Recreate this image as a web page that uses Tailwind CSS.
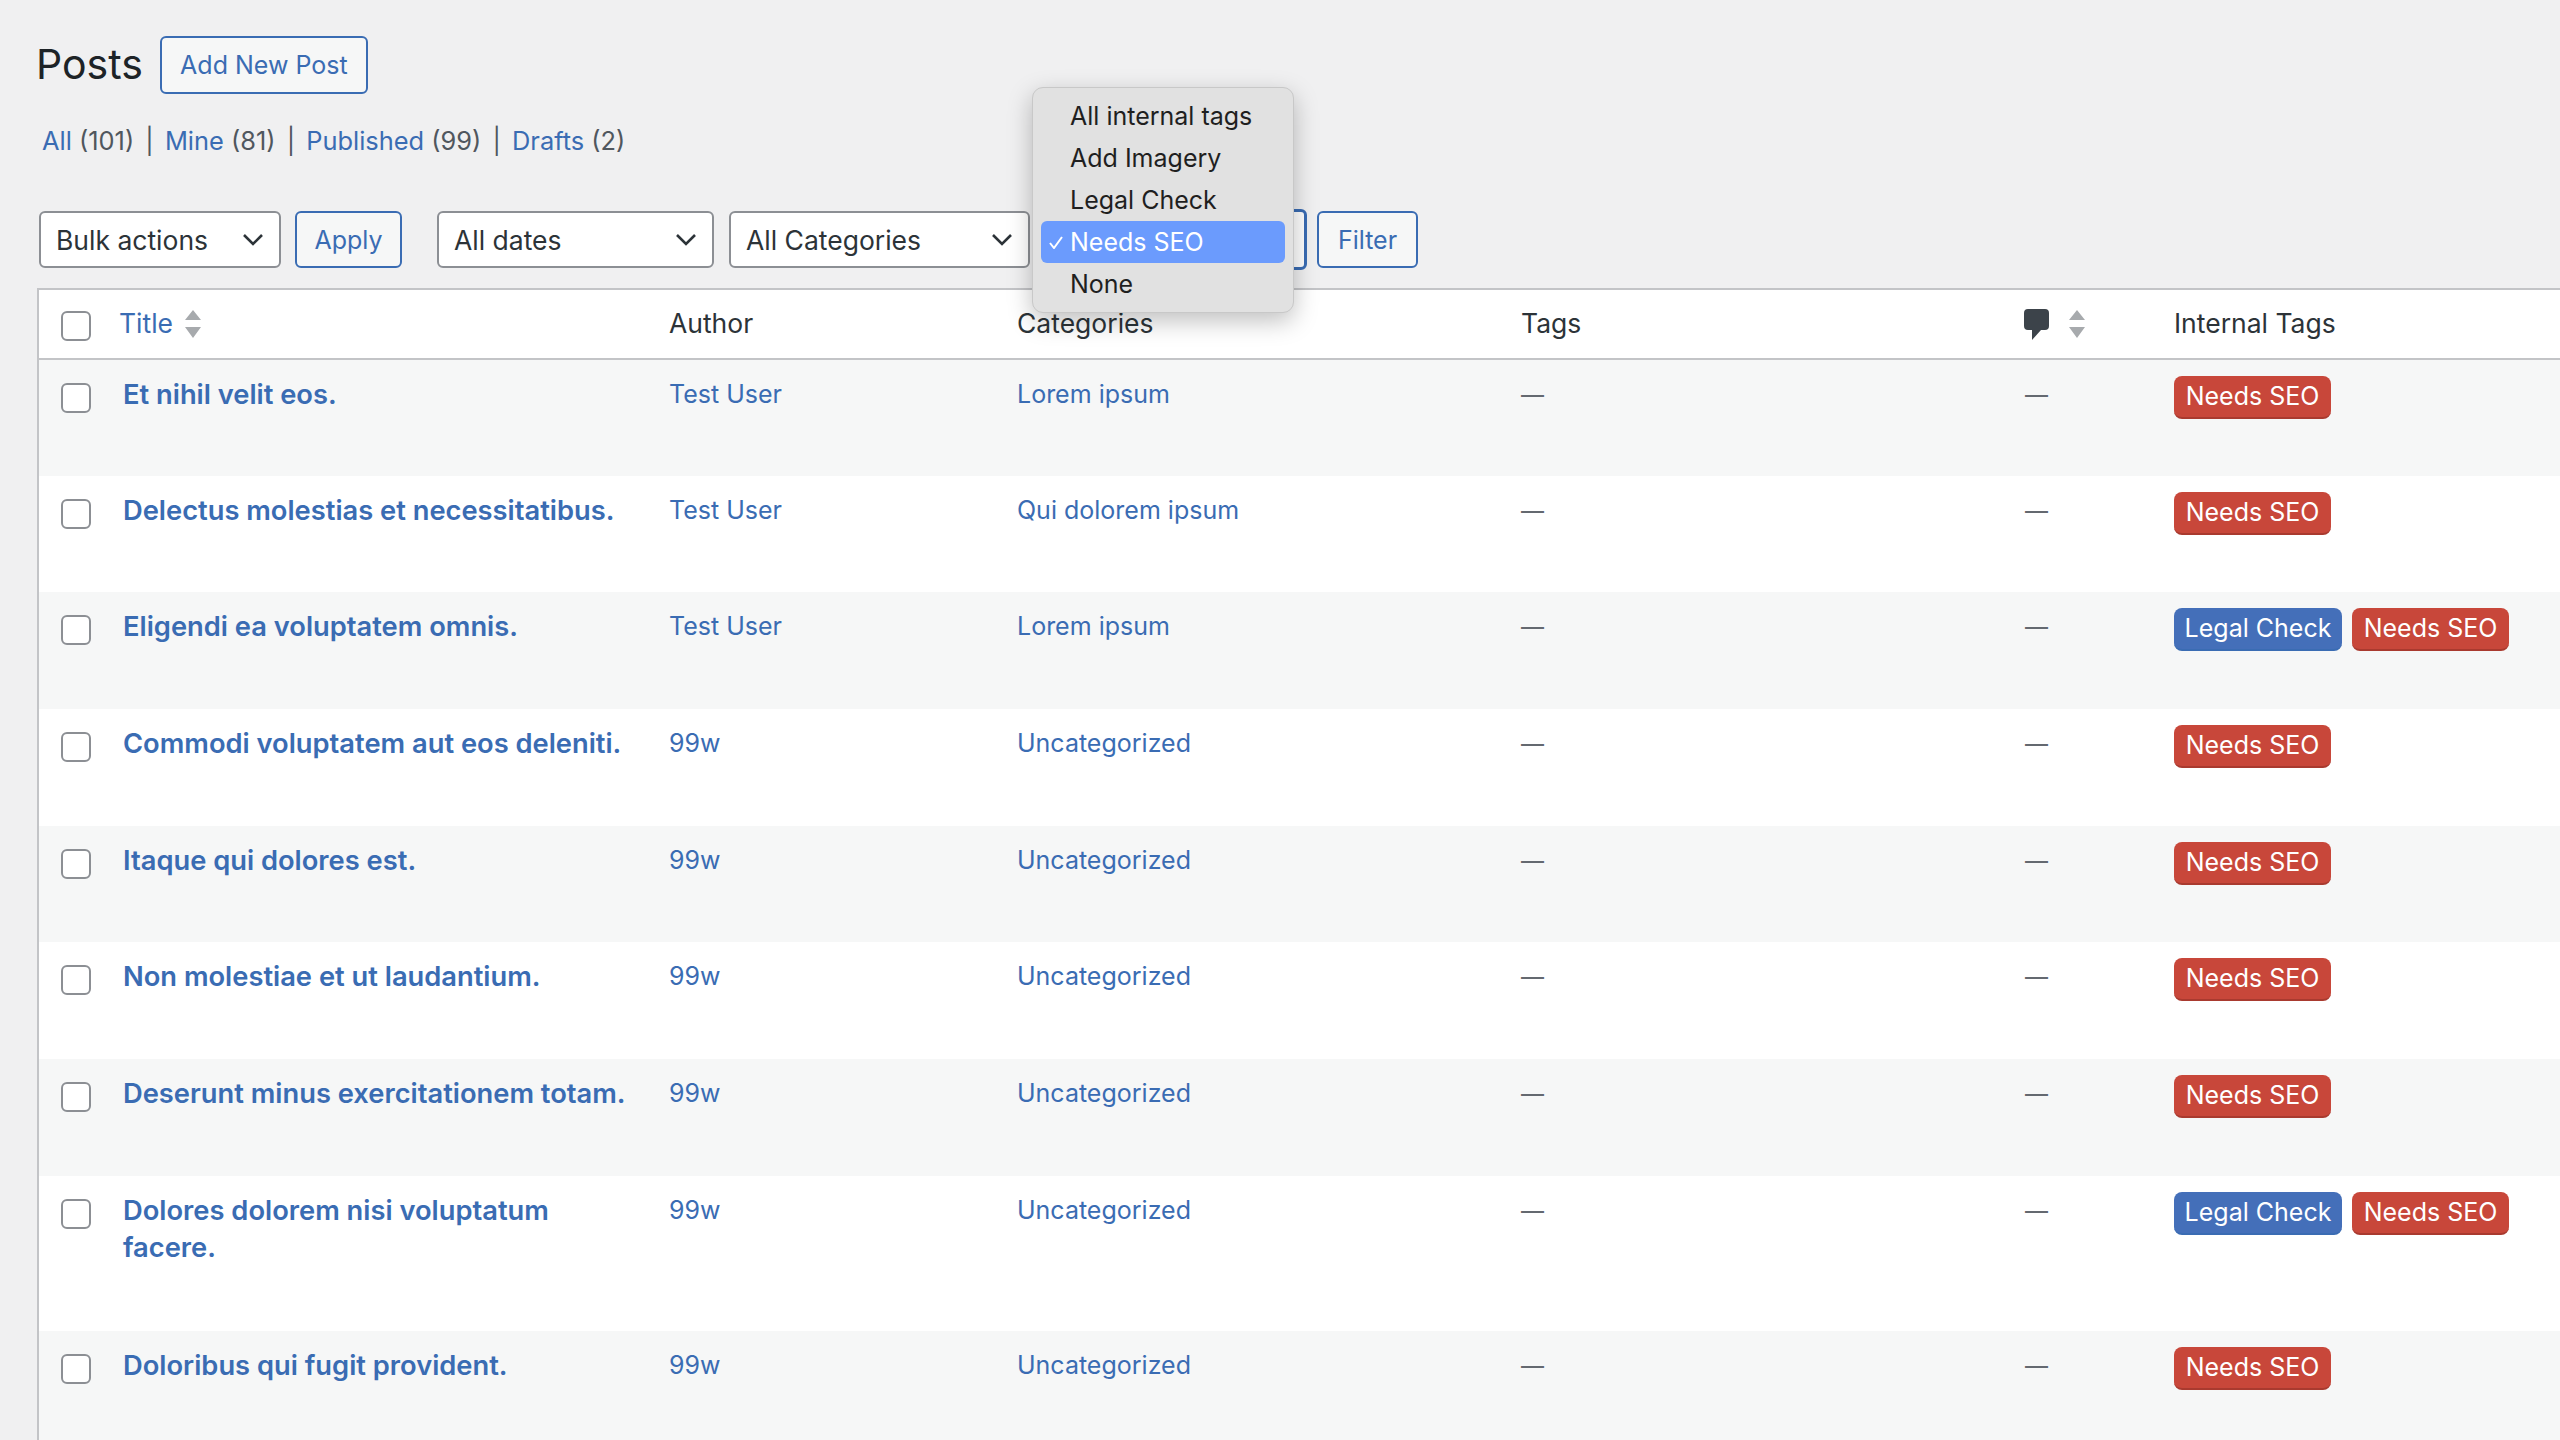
<!doctype html>
<html lang="en">
  <head>
    <meta charset="UTF-8" />
    <title>Posts</title>
    <script src="https://cdn.jsdelivr.net/npm/@tailwindcss/browser@4"></script>
  </head>

  <body class="bg-[#f0f0f1] text-[#3c434a] font-['Inter',sans-serif] text-[25px] h-[1440px] overflow-hidden relative">
    <div class="pt-[36px]">
      <div class="pl-[36px] flex items-center h-[58px]">
        <h1 class="text-[41px] text-[#1d2327] font-normal">Posts</h1>
        <a class="ml-[17px] w-[208px] h-[58px] pt-[1px] flex items-center justify-center border-2 border-[#3a6cb3] rounded-[6px] bg-[#f6f7f7] text-[#3a6cb3]">Add New Post</a>
      </div>

      <div class="pl-[42px] mt-[27px] h-[40px] leading-[40px] text-[25.4px] text-[#50575e]">
        <a class="text-[#3a6cb3]">All</a> (101) <span class="mx-[4px]">|</span> <a class="text-[#3a6cb3]">Mine</a> (81) <span class="mx-[4px]">|</span> <a class="text-[#3a6cb3]">Published</a> (99) <span class="mx-[4px]">|</span> <a class="text-[#3a6cb3]">Drafts</a> (2)
      </div>

      <div class="pl-[39px] mt-[50px] flex items-center h-[57px]">
        <div class="w-[242px] h-[57px] pl-[15px] pr-[16px] flex items-center justify-between bg-white border-2 border-[#8c8f94] rounded-[6px] text-[#2c3338] text-[26.5px]">
          <span class="mt-[2px]">Bulk actions</span>
          <svg class="w-[20px] h-[12px]" viewBox="0 0 20 12" fill="none" stroke="#2c3338" stroke-width="2.6"><path d="M1 1l9 9 9-9"/></svg>
        </div>
        <a class="ml-[14px] w-[107px] h-[57px] pt-[2px] flex items-center justify-center border-2 border-[#3a6cb3] rounded-[6px] bg-[#f6f7f7] text-[#3a6cb3]">Apply</a>
        <div class="ml-[35px] w-[277px] h-[57px] pl-[15px] pr-[16px] flex items-center justify-between bg-white border-2 border-[#8c8f94] rounded-[6px] text-[#2c3338] text-[26.5px]">
          <span class="mt-[2px]">All dates</span>
          <svg class="w-[20px] h-[12px]" viewBox="0 0 20 12" fill="none" stroke="#2c3338" stroke-width="2.6"><path d="M1 1l9 9 9-9"/></svg>
        </div>
        <div class="ml-[15px] w-[301px] h-[57px] pl-[15px] pr-[16px] flex items-center justify-between bg-white border-2 border-[#8c8f94] rounded-[6px] text-[#2c3338] text-[26.5px]">
          <span class="mt-[2px]">All Categories</span>
          <svg class="w-[20px] h-[12px]" viewBox="0 0 20 12" fill="none" stroke="#2c3338" stroke-width="2.6"><path d="M1 1l9 9 9-9"/></svg>
        </div>
        <div class="ml-[10px] w-[267px] h-[61px] bg-white border-[3px] border-[#3a6cb3] rounded-[6px]"></div>
        <a class="ml-[10px] w-[101px] h-[57px] pt-[2px] flex items-center justify-center border-2 border-[#3a6cb3] rounded-[6px] bg-[#f6f7f7] text-[#3a6cb3]">Filter</a>
      </div>

      <table class="ml-[37px] mt-[20px] w-[2523px] table-fixed bg-white border-l-2 border-t-2 border-[#c3c4c7] border-collapse">
        <colgroup>
          <col class="w-[66px]" /><col class="w-[549px]" /><col class="w-[348px]" /><col class="w-[504px]" /><col class="w-[504px]" /><col class="w-[149px]" /><col />
        </colgroup>
        <thead>
          <tr class="h-[70px] border-b-2 border-[#c3c4c7] text-[#2c3338] text-left text-[26.5px]">
            <th class="pl-[22px] font-normal"><span class="block mt-[3px] w-[30px] h-[30px] bg-white border-2 border-[#8c8f94] rounded-[6px]"></span></th>
            <th class="pl-[15px] font-normal">
              <span class="flex items-center gap-[12px] text-[#3a6cb3]">Title
                <svg class="w-[16px] h-[28px]" viewBox="0 0 16 28" fill="#a7aaad"><path d="M8 0l8 10H0zM0 17h16L8 28z"/></svg>
              </span>
            </th>
            <th class="pl-[16px] font-normal">Author</th>
            <th class="pl-[16px] font-normal">Categories</th>
            <th class="pl-[16px] font-normal">Tags</th>
            <th class="pl-[15px] font-normal">
              <span class="flex items-center gap-[20px]">
                <svg class="w-[25px] h-[31px]" viewBox="0 0 25 31" fill="#3c434a"><path d="M4 0h17a4 4 0 0 1 4 4v13a4 4 0 0 1-4 4h-4L8 31V21H4a4 4 0 0 1-4-4V4a4 4 0 0 1 4-4z"/></svg>
                <svg class="w-[16px] h-[28px]" viewBox="0 0 16 28" fill="#a7aaad"><path d="M8 0l8 10H0zM0 17h16L8 28z"/></svg>
              </span>
            </th>
            <th class="pl-[16px] font-normal">Internal Tags</th>
          </tr>
        </thead>
        <tbody class="leading-[37px] [&_td]:align-top [&_td]:pt-[16px]">
          <tr class="h-[116.7px] bg-[#f6f7f7]">
            <td class="pl-[22px]"><span class="block mt-[7px] w-[30px] h-[30px] bg-white border-2 border-[#8c8f94] rounded-[6px]"></span></td>
            <td class="pl-[19px] pr-[16px] font-semibold text-[27.3px] text-[#3a6cb3]">Et nihil velit eos.</td>
            <td class="pl-[16px] text-[#3a6cb3]">Test User</td>
            <td class="pl-[16px] text-[#3a6cb3]">Lorem ipsum</td>
            <td class="pl-[16px] text-[23px] text-[#646970]"><span class="block mt-[1px]">—</span></td>
            <td class="pl-[16px] text-[23px] text-[#646970]"><span class="block mt-[1px]">—</span></td>
            <td class="pl-[16px]"><div class="flex gap-[10px]"><span class="h-[43px] w-[157px] flex items-center justify-center rounded-[8px] bg-[#c8473a] border-b-2 border-[#a93a2f] text-white">Needs SEO</span></div></td>
          </tr>
          <tr class="h-[116.7px] bg-white">
            <td class="pl-[22px]"><span class="block mt-[7px] w-[30px] h-[30px] bg-white border-2 border-[#8c8f94] rounded-[6px]"></span></td>
            <td class="pl-[19px] pr-[16px] font-semibold text-[27.3px] text-[#3a6cb3]">Delectus molestias et necessitatibus.</td>
            <td class="pl-[16px] text-[#3a6cb3]">Test User</td>
            <td class="pl-[16px] text-[#3a6cb3]">Qui dolorem ipsum</td>
            <td class="pl-[16px] text-[23px] text-[#646970]"><span class="block mt-[1px]">—</span></td>
            <td class="pl-[16px] text-[23px] text-[#646970]"><span class="block mt-[1px]">—</span></td>
            <td class="pl-[16px]"><div class="flex gap-[10px]"><span class="h-[43px] w-[157px] flex items-center justify-center rounded-[8px] bg-[#c8473a] border-b-2 border-[#a93a2f] text-white">Needs SEO</span></div></td>
          </tr>
          <tr class="h-[116.7px] bg-[#f6f7f7]">
            <td class="pl-[22px]"><span class="block mt-[7px] w-[30px] h-[30px] bg-white border-2 border-[#8c8f94] rounded-[6px]"></span></td>
            <td class="pl-[19px] pr-[16px] font-semibold text-[27.3px] text-[#3a6cb3]">Eligendi ea voluptatem omnis.</td>
            <td class="pl-[16px] text-[#3a6cb3]">Test User</td>
            <td class="pl-[16px] text-[#3a6cb3]">Lorem ipsum</td>
            <td class="pl-[16px] text-[23px] text-[#646970]"><span class="block mt-[1px]">—</span></td>
            <td class="pl-[16px] text-[23px] text-[#646970]"><span class="block mt-[1px]">—</span></td>
            <td class="pl-[16px]"><div class="flex gap-[10px]"><span class="h-[43px] w-[168px] flex items-center justify-center rounded-[8px] bg-[#446fb9] border-b-2 border-[#3a6cb3] text-white">Legal Check</span><span class="h-[43px] w-[157px] flex items-center justify-center rounded-[8px] bg-[#c8473a] border-b-2 border-[#a93a2f] text-white">Needs SEO</span></div></td>
          </tr>
          <tr class="h-[116.7px] bg-white">
            <td class="pl-[22px]"><span class="block mt-[7px] w-[30px] h-[30px] bg-white border-2 border-[#8c8f94] rounded-[6px]"></span></td>
            <td class="pl-[19px] pr-[16px] font-semibold text-[27.3px] text-[#3a6cb3]">Commodi voluptatem aut eos deleniti.</td>
            <td class="pl-[16px] text-[#3a6cb3]">99w</td>
            <td class="pl-[16px] text-[#3a6cb3]">Uncategorized</td>
            <td class="pl-[16px] text-[23px] text-[#646970]"><span class="block mt-[1px]">—</span></td>
            <td class="pl-[16px] text-[23px] text-[#646970]"><span class="block mt-[1px]">—</span></td>
            <td class="pl-[16px]"><div class="flex gap-[10px]"><span class="h-[43px] w-[157px] flex items-center justify-center rounded-[8px] bg-[#c8473a] border-b-2 border-[#a93a2f] text-white">Needs SEO</span></div></td>
          </tr>
          <tr class="h-[116.7px] bg-[#f6f7f7]">
            <td class="pl-[22px]"><span class="block mt-[7px] w-[30px] h-[30px] bg-white border-2 border-[#8c8f94] rounded-[6px]"></span></td>
            <td class="pl-[19px] pr-[16px] font-semibold text-[27.3px] text-[#3a6cb3]">Itaque qui dolores est.</td>
            <td class="pl-[16px] text-[#3a6cb3]">99w</td>
            <td class="pl-[16px] text-[#3a6cb3]">Uncategorized</td>
            <td class="pl-[16px] text-[23px] text-[#646970]"><span class="block mt-[1px]">—</span></td>
            <td class="pl-[16px] text-[23px] text-[#646970]"><span class="block mt-[1px]">—</span></td>
            <td class="pl-[16px]"><div class="flex gap-[10px]"><span class="h-[43px] w-[157px] flex items-center justify-center rounded-[8px] bg-[#c8473a] border-b-2 border-[#a93a2f] text-white">Needs SEO</span></div></td>
          </tr>
          <tr class="h-[116.7px] bg-white">
            <td class="pl-[22px]"><span class="block mt-[7px] w-[30px] h-[30px] bg-white border-2 border-[#8c8f94] rounded-[6px]"></span></td>
            <td class="pl-[19px] pr-[16px] font-semibold text-[27.3px] text-[#3a6cb3]">Non molestiae et ut laudantium.</td>
            <td class="pl-[16px] text-[#3a6cb3]">99w</td>
            <td class="pl-[16px] text-[#3a6cb3]">Uncategorized</td>
            <td class="pl-[16px] text-[23px] text-[#646970]"><span class="block mt-[1px]">—</span></td>
            <td class="pl-[16px] text-[23px] text-[#646970]"><span class="block mt-[1px]">—</span></td>
            <td class="pl-[16px]"><div class="flex gap-[10px]"><span class="h-[43px] w-[157px] flex items-center justify-center rounded-[8px] bg-[#c8473a] border-b-2 border-[#a93a2f] text-white">Needs SEO</span></div></td>
          </tr>
          <tr class="h-[116.7px] bg-[#f6f7f7]">
            <td class="pl-[22px]"><span class="block mt-[7px] w-[30px] h-[30px] bg-white border-2 border-[#8c8f94] rounded-[6px]"></span></td>
            <td class="pl-[19px] pr-[16px] font-semibold text-[27.3px] text-[#3a6cb3]">Deserunt minus exercitationem totam.</td>
            <td class="pl-[16px] text-[#3a6cb3]">99w</td>
            <td class="pl-[16px] text-[#3a6cb3]">Uncategorized</td>
            <td class="pl-[16px] text-[23px] text-[#646970]"><span class="block mt-[1px]">—</span></td>
            <td class="pl-[16px] text-[23px] text-[#646970]"><span class="block mt-[1px]">—</span></td>
            <td class="pl-[16px]"><div class="flex gap-[10px]"><span class="h-[43px] w-[157px] flex items-center justify-center rounded-[8px] bg-[#c8473a] border-b-2 border-[#a93a2f] text-white">Needs SEO</span></div></td>
          </tr>
          <tr class="h-[155px] bg-white">
            <td class="pl-[22px]"><span class="block mt-[7px] w-[30px] h-[30px] bg-white border-2 border-[#8c8f94] rounded-[6px]"></span></td>
            <td class="pl-[19px] pr-[16px] font-semibold text-[27.3px] text-[#3a6cb3]">Dolores dolorem nisi voluptatum facere.</td>
            <td class="pl-[16px] text-[#3a6cb3]">99w</td>
            <td class="pl-[16px] text-[#3a6cb3]">Uncategorized</td>
            <td class="pl-[16px] text-[23px] text-[#646970]"><span class="block mt-[1px]">—</span></td>
            <td class="pl-[16px] text-[23px] text-[#646970]"><span class="block mt-[1px]">—</span></td>
            <td class="pl-[16px]"><div class="flex gap-[10px]"><span class="h-[43px] w-[168px] flex items-center justify-center rounded-[8px] bg-[#446fb9] border-b-2 border-[#3a6cb3] text-white">Legal Check</span><span class="h-[43px] w-[157px] flex items-center justify-center rounded-[8px] bg-[#c8473a] border-b-2 border-[#a93a2f] text-white">Needs SEO</span></div></td>
          </tr>
          <tr class="h-[116.7px] bg-[#f6f7f7]">
            <td class="pl-[22px]"><span class="block mt-[7px] w-[30px] h-[30px] bg-white border-2 border-[#8c8f94] rounded-[6px]"></span></td>
            <td class="pl-[19px] pr-[16px] font-semibold text-[27.3px] text-[#3a6cb3]">Doloribus qui fugit provident.</td>
            <td class="pl-[16px] text-[#3a6cb3]">99w</td>
            <td class="pl-[16px] text-[#3a6cb3]">Uncategorized</td>
            <td class="pl-[16px] text-[23px] text-[#646970]"><span class="block mt-[1px]">—</span></td>
            <td class="pl-[16px] text-[23px] text-[#646970]"><span class="block mt-[1px]">—</span></td>
            <td class="pl-[16px]"><div class="flex gap-[10px]"><span class="h-[43px] w-[157px] flex items-center justify-center rounded-[8px] bg-[#c8473a] border-b-2 border-[#a93a2f] text-white">Needs SEO</span></div></td>
          </tr>
        </tbody>
      </table>
    </div>

    <!-- open select menu -->
    <div class="absolute left-[1032px] top-[87px] w-[262px] h-[226px] py-[7px] px-[8px] bg-[#e1e1e1] border border-[#c8c8c8] rounded-[11px] shadow-[0_8px_24px_rgba(0,0,0,0.25)] text-[25px] text-[#1f1f1f]">
      <div class="h-[42px] leading-[42px] pl-[29px]">All internal tags</div>
      <div class="h-[42px] leading-[42px] pl-[29px]">Add Imagery</div>
      <div class="h-[42px] leading-[42px] pl-[29px]">Legal Check</div>
      <div class="relative h-[42px] leading-[42px] pl-[29px] bg-[#6b9bfd] rounded-[6px] text-white">
        <svg class="absolute left-[8px] top-[15px] w-[14px] h-[13px]" viewBox="0 0 14 13" fill="none" stroke="#fff" stroke-width="2"><path d="M1 7l4 5L13 1"/></svg>
        Needs SEO
      </div>
      <div class="h-[42px] leading-[42px] pl-[29px]">None</div>
    </div>
  </body>
</html>
